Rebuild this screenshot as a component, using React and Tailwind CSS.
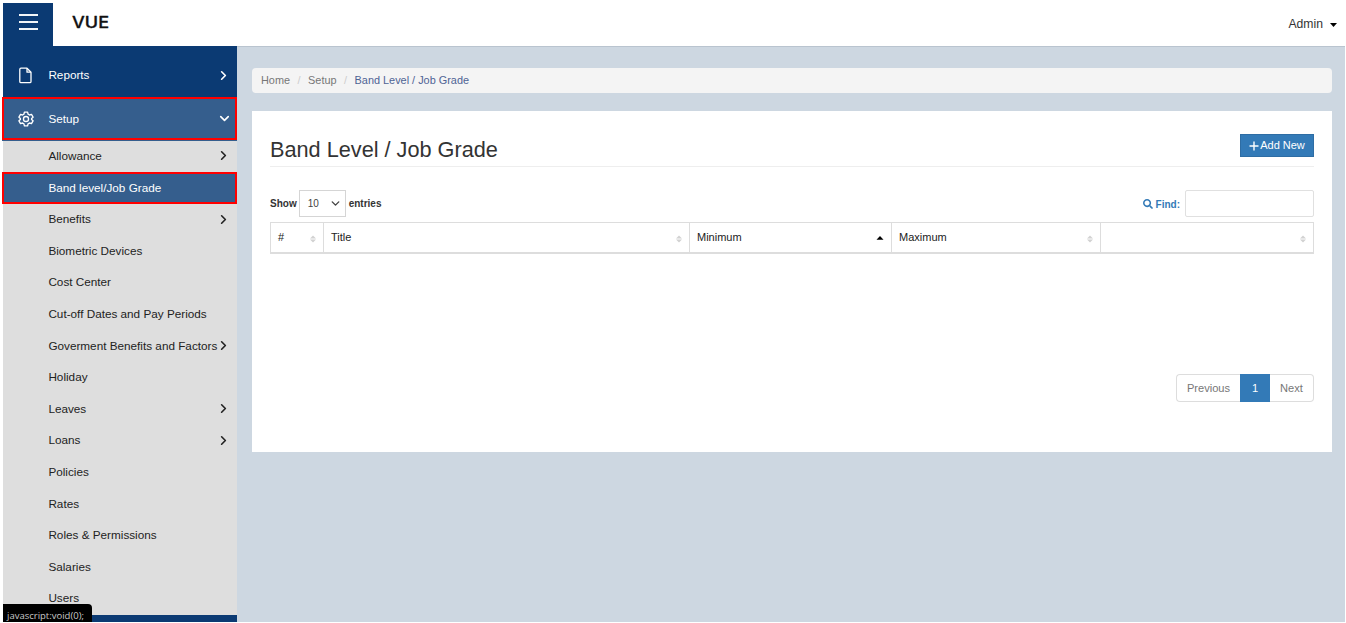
import { ChevronRight, ChevronDown } from "lucide-react";
import { FaSearch } from "react-icons/fa";

const submenu = [
  { label: "Allowance", more: true },
  { label: "Band level/Job Grade", active: true },
  { label: "Benefits", more: true },
  { label: "Biometric Devices" },
  { label: "Cost Center" },
  { label: "Cut-off Dates and Pay Periods" },
  { label: "Goverment Benefits and Factors", more: true },
  { label: "Holiday" },
  { label: "Leaves", more: true },
  { label: "Loans", more: true },
  { label: "Policies" },
  { label: "Rates" },
  { label: "Roles & Permissions" },
  { label: "Salaries" },
  { label: "Users" },
];

const columns = [
  { label: "#", width: "w-[53px]" },
  { label: "Title", width: "w-[366px]" },
  { label: "Minimum", width: "w-[202px]", sorted: true },
  { label: "Maximum", width: "w-[209px]" },
  { label: "", width: "w-[213px]" },
];

function FileIcon() {
  return (
    <svg className="h-[17px] w-[15px]" viewBox="0 0 15 17" fill="none" stroke="#fff" strokeWidth="1.3" strokeLinejoin="round">
      <path d="M3 1.2h6l4 4v9.3a1.2 1.2 0 0 1-1.2 1.2H3a1.2 1.2 0 0 1-1.2-1.2V2.4A1.2 1.2 0 0 1 3 1.2z" />
      <path d="M9 1.2v4h4" />
    </svg>
  );
}

function GearIcon() {
  return (
    <svg className="h-4 w-4" viewBox="0 0 24 24" fill="none" stroke="#fff" strokeWidth="2" strokeLinejoin="round">
      <circle cx="12" cy="12" r="3.8" />
      <path d="M9.6 1.8h4.8l.7 3 2.1 1.2 3-.9 2.4 4.2-2.2 2.1v1.2l2.2 2.1-2.4 4.2-3-.9-2.1 1.2-.7 3H9.6l-.7-3L6.8 18l-3 .9-2.4-4.2 2.2-2.1v-1.2L1.4 9.3l2.4-4.2 3 .9 2.1-1.2z" />
    </svg>
  );
}

function SortIcon({ sorted }) {
  return sorted ? (
    <svg className="mt-px h-2 w-2" viewBox="0 0 8 8"><path d="M0.5 5.8 4 2l3.5 3.8z" fill="#000" /></svg>
  ) : (
    <svg className="mt-[3px] h-2 w-1.5" viewBox="0 0 6 8" fill="#d2d2d2"><path d="M0 3.4 3 .4l3 3zM0 4.6h6l-3 3z" /></svg>
  );
}

function Sidebar() {
  return (
    <aside className="relative flex w-[234px] shrink-0 flex-col bg-[#0b3a73] text-[11.74px] text-white">
      <div className="flex h-[51px] items-center pt-[7px] pr-[6px] pl-[15px]">
        <FileIcon />
        <span className="ml-[15.4px] flex-1">Reports</span>
        <ChevronRight size={15} strokeWidth={2.6} />
      </div>
      <div className="-ml-px h-[43.5px] bg-[#355e8d]">
        <div className="flex h-[43px] items-center border-2 border-[#ff0000] pr-[3px] pl-[14px]">
          <GearIcon />
          <span className="ml-[14.4px] flex-1">Setup</span>
          <ChevronDown size={15} strokeWidth={2.6} />
        </div>
      </div>
      <nav className="bg-[#dedede] pb-[0.3px] text-[#222]">
        {submenu.map((item) => (
          <div
            key={item.label}
            className={
              item.active
                ? "-ml-px flex h-[31.6px] items-center border-2 border-[#ff0000] bg-[#355e8d] pl-[44.4px] text-white"
                : "flex h-[31.6px] items-center pr-[6px] pb-[0.8px] pl-[45.4px]"
            }
          >
            <span className="flex-1 whitespace-nowrap">{item.label}</span>
            {item.more && <ChevronRight size={15} strokeWidth={2.6} className="-ml-2 shrink-0" />}
          </div>
        ))}
      </nav>
      <div className="absolute bottom-0 left-0 flex h-[18px] w-[89px] items-center rounded-tr-[4px] bg-black pt-[6px] pl-[4px] font-['Open_Sans',sans-serif] text-[9.5px] text-[#c8c8c8]">
        javascript:void(0);
      </div>
    </aside>
  );
}

export default function App() {
  return (
    <div className="flex h-[623px] w-[1346px] flex-col overflow-hidden bg-white pt-[3px] pr-px pb-px pl-[3px] font-['Liberation_Sans',Arial,sans-serif]">
      <header className="flex h-[43px] shrink-0">
        <div className="flex w-[50px] flex-col items-center gap-[5px] bg-[#0b3a73] pt-[11px]">
          <span className="h-[2px] w-[19px] bg-[#f2f5f8]" />
          <span className="h-[2px] w-[19px] bg-[#f2f5f8]" />
          <span className="h-[2px] w-[19px] bg-[#f2f5f8]" />
        </div>
        <svg className="mt-2 ml-[18px] h-[22px] w-11" viewBox="0 0 44 22">
          <text x="1" y="16.5" textLength="37" lengthAdjust="spacingAndGlyphs" fontSize="15.5" fontWeight="500" fontFamily="Inter, sans-serif" fill="#111" stroke="#111" strokeWidth=".3" strokeLinejoin="round">VUE</text>
        </svg>
        <div className="ml-auto flex items-center gap-[7px] pr-[8px] text-[12.2px] text-[#333]">
          <span>Admin</span>
          <svg className="h-[4px] w-[7px]" viewBox="0 0 7 4"><path d="M0 0h7L3.5 4z" fill="#000" /></svg>
        </div>
      </header>

      <div className="flex min-h-0 flex-1">
        <Sidebar />
        <main className="flex-1 border-t border-[#b9c4cf] bg-[#cdd7e1] pt-[21px] pr-[13px] pl-[15px]">
          <div className="flex h-[25px] items-center gap-[7.5px] rounded-[4px] bg-[#f4f4f4] pl-[9px] text-[10.9px] text-[#777]">
            <span>Home</span>
            <span className="text-[#ccc]">/</span>
            <span>Setup</span>
            <span className="text-[#ccc]">/</span>
            <span className="text-[#4f6394]">Band Level / Job Grade</span>
          </div>

          <section className="mt-[18px] h-[341px] bg-white px-[18px] pt-[23px]">
            <div className="flex h-[33px] items-start justify-between border-b border-[#eee]">
              <h1 className="mt-[3px] text-[21.7px] leading-[26px] text-[#333]">Band Level / Job Grade</h1>
              <button className="flex h-[23px] w-[74px] items-center justify-center gap-px border border-[#2e6da4] bg-[#337ab7] text-[11px] text-white">
                <svg className="h-[10px] w-[10px]" viewBox="0 0 10 10" stroke="#fff" strokeWidth="1.4"><path d="M5 .5v9M.5 5h9" /></svg>
                Add New
              </button>
            </div>

            <div className="mt-[23px] flex h-[27px] items-center text-[10px] font-bold text-[#333]">
              <span>Show</span>
              <div className="mr-[3px] ml-[2px] flex h-[27px] w-[47px] items-center justify-between border border-[#d5d5d5] pr-[3px] pl-[8px] font-normal text-[#444]">
                10
                <ChevronDown size={13} strokeWidth={2.6} />
              </div>
              <span>entries</span>
              <div className="ml-auto flex items-center text-[#337ab7]">
                <FaSearch size={10} />
                <span className="mt-px mr-[5px] ml-[3px]">Find:</span>
                <input className="h-[27px] w-[129px] rounded-[2px] border border-[#e0e0e0] bg-white" />
              </div>
            </div>

            <div className="mt-[5px] flex h-8 border-t border-b-2 border-l border-[#ddd] text-[11px] text-[#222]">
              {columns.map((col, i) => (
                <div key={i} className={`${col.width} flex shrink-0 items-center justify-between border-r border-[#ddd] pr-[7px] pl-[7px]`}>
                  <span>{col.label}</span>
                  <SortIcon sorted={col.sorted} />
                </div>
              ))}
            </div>

            <div className="mt-[120px] flex justify-end text-[11.1px] text-[#777]">
              <div className="flex h-7 w-[64px] items-center justify-center rounded-l-[4px] border border-r-0 border-[#ddd]">Previous</div>
              <div className="flex h-7 w-[30px] items-center justify-center bg-[#337ab7] text-white">1</div>
              <div className="flex h-7 w-[44px] items-center justify-center rounded-r-[4px] border border-l-0 border-[#ddd]">Next</div>
            </div>
          </section>
        </main>
      </div>
    </div>
  );
}
